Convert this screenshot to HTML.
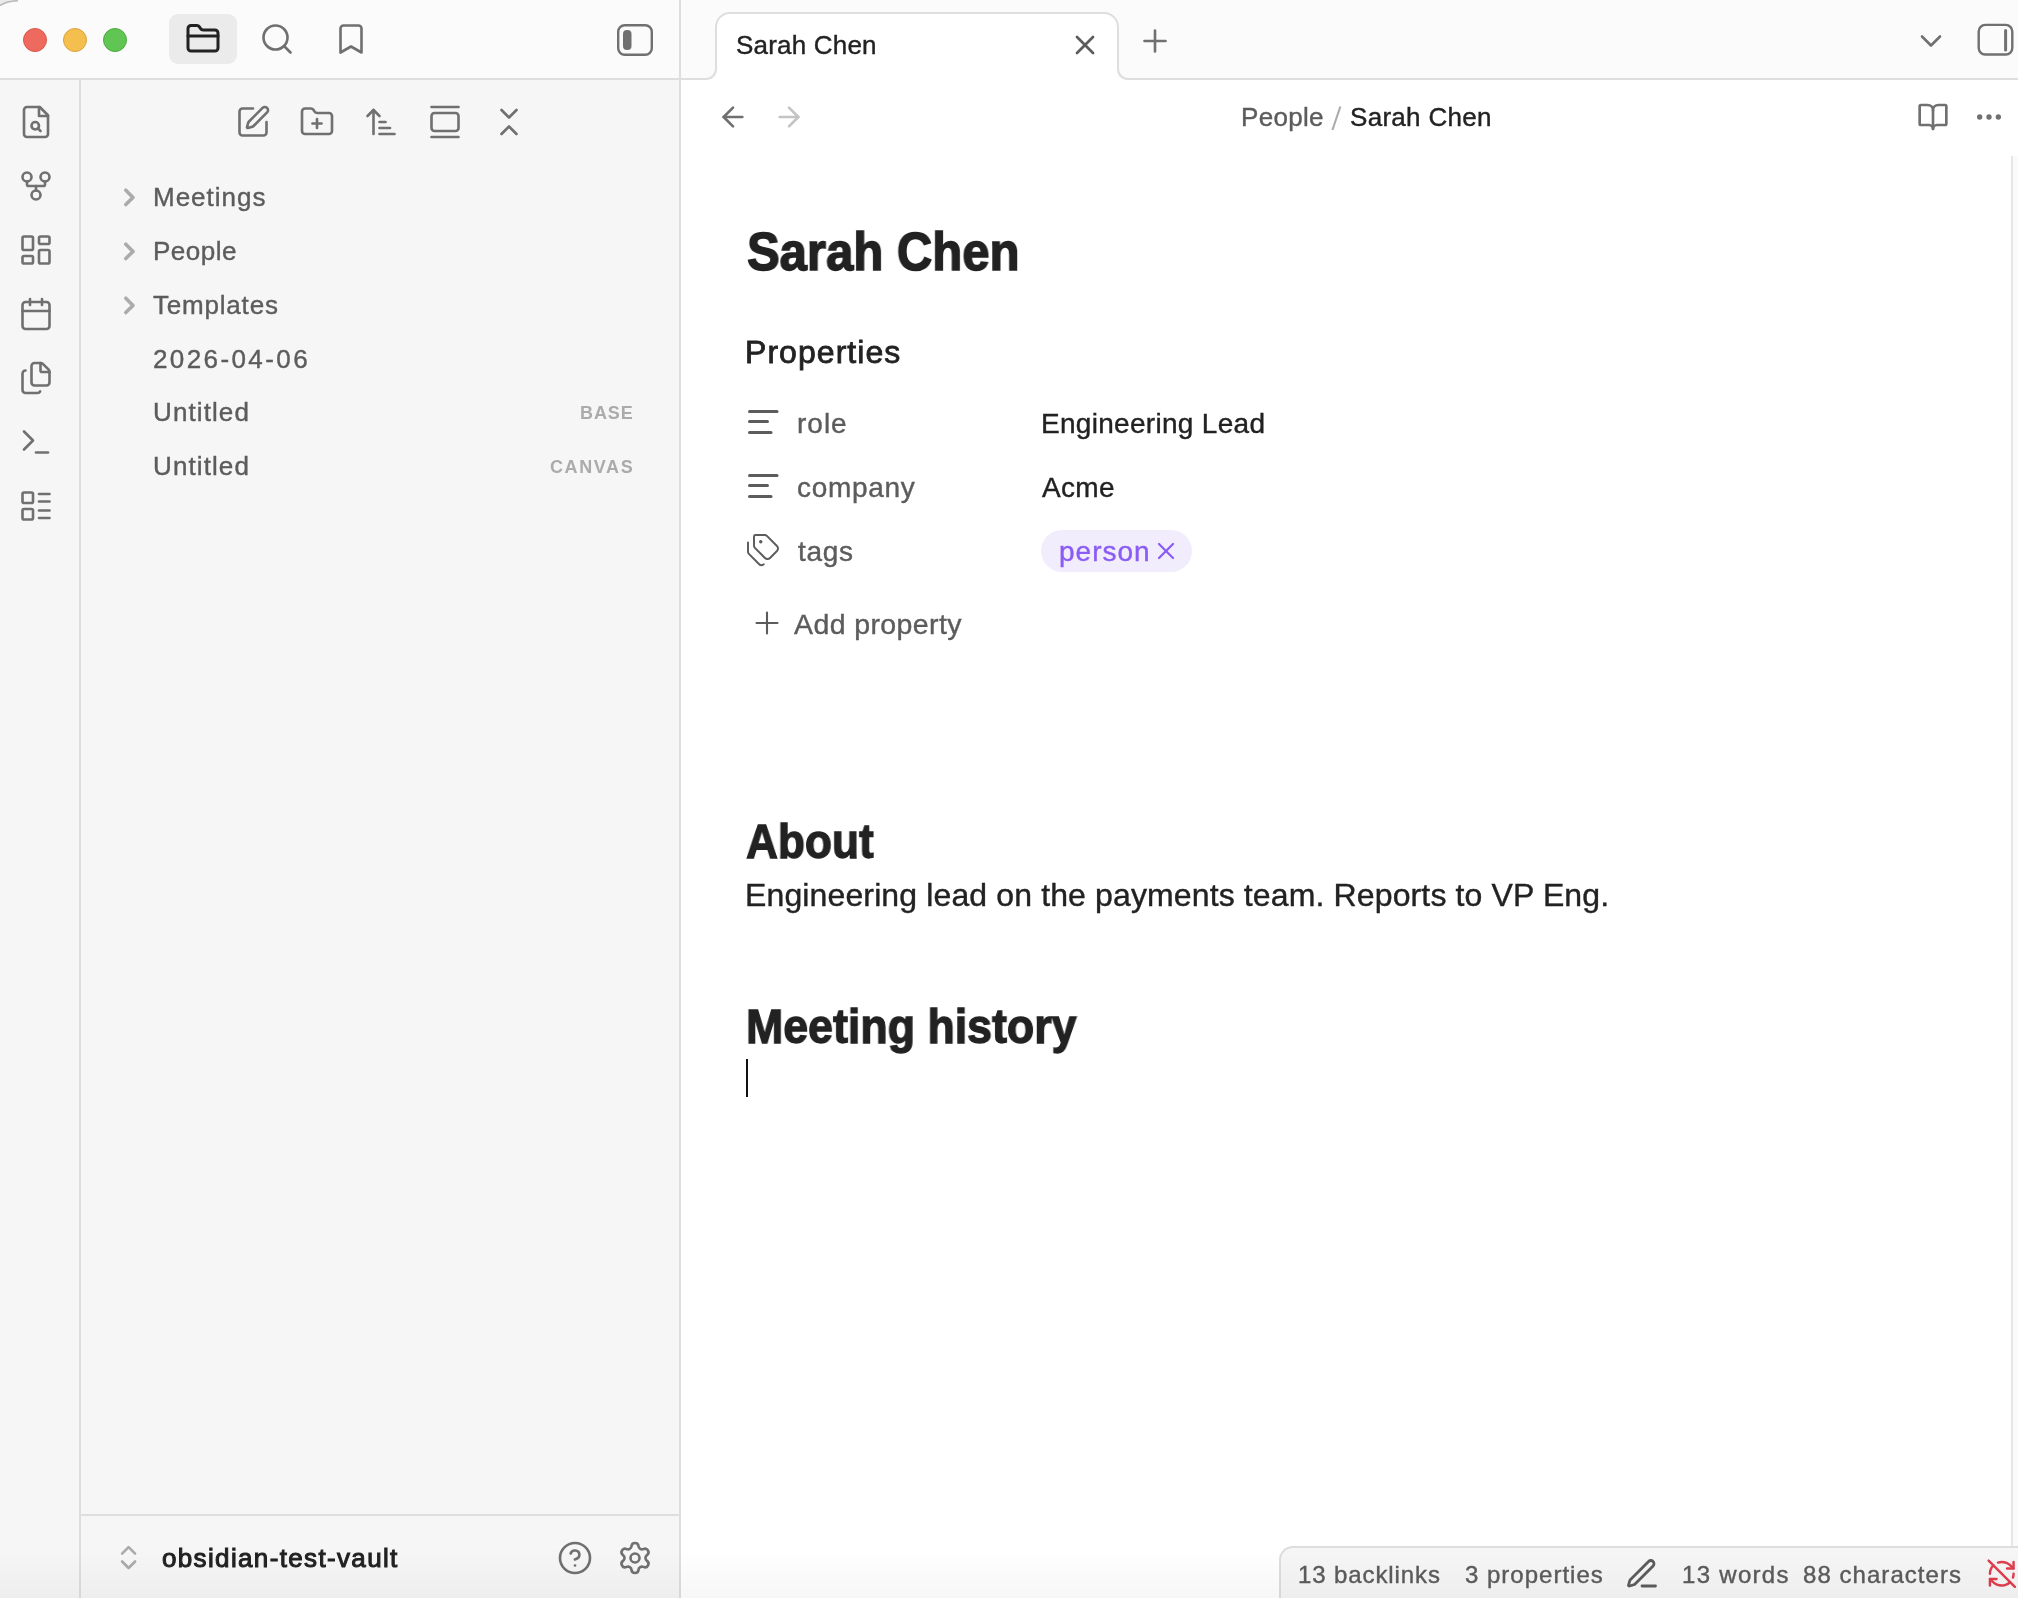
<!DOCTYPE html>
<html><head><meta charset="utf-8">
<style>
html,body{margin:0;padding:0;}
body{width:2018px;height:1598px;overflow:hidden;position:relative;background:#fff;font-family:"Liberation Sans",sans-serif;-webkit-font-smoothing:antialiased;}
.a{position:absolute;}
.t{position:absolute;white-space:nowrap;line-height:1;will-change:transform;-webkit-text-stroke:0.4px currentColor;}
svg.i{position:absolute;fill:none;stroke:currentColor;stroke-linecap:round;stroke-linejoin:round;overflow:visible;}
</style></head><body>
<div class="a" style="left:0px;top:0px;width:2018px;height:78px;background:#fbfbfb;"></div>
<div class="a" style="left:0px;top:80px;width:79px;height:1518px;background:#f6f6f6;"></div>
<div class="a" style="left:81px;top:80px;width:598px;height:1518px;background:#f6f6f6;"></div>
<div class="a" style="left:0px;top:78px;width:706px;height:2px;background:#dedede;"></div>
<div class="a" style="left:1128px;top:78px;width:890px;height:2px;background:#dedede;"></div>
<div class="a" style="left:79px;top:80px;width:2px;height:1518px;background:#dedede;"></div>
<div class="a" style="left:679px;top:0px;width:2px;height:1598px;background:#dedede;"></div>
<div class="a" style="left:81px;top:1514px;width:598px;height:2px;background:#dedede;"></div>
<svg class="a" style="left:0;top:0" width="30" height="12"><path d="M0 0H18Q6 1 0 6Z" fill="#e9e9e9"/><path d="M18 0.6Q6 1.2 0 5.6" fill="none" stroke="#bdbdbd" stroke-width="1.6"/></svg>
<div class="a" style="left:23px;top:28px;width:22px;height:22px;border-radius:50%;background:#ee6a5f;border:1px solid #d8574c"></div>
<div class="a" style="left:63px;top:28px;width:22px;height:22px;border-radius:50%;background:#f5bf4f;border:1px solid #dba23b"></div>
<div class="a" style="left:103px;top:28px;width:22px;height:22px;border-radius:50%;background:#61c554;border:1px solid #4caa40"></div>
<div class="a" style="left:169px;top:14px;width:68px;height:50px;background:#ebebeb;border-radius:9px"></div>
<svg class="i" style="left:185px;top:21px;color:#222222" width="36" height="36" viewBox="0 0 24 24" stroke-width="2.0"><path d="M20 20a2 2 0 0 0 2-2V8a2 2 0 0 0-2-2h-7.9a2 2 0 0 1-1.69-.9L9.6 3.9A2 2 0 0 0 7.93 3H4a2 2 0 0 0-2 2v13a2 2 0 0 0 2 2Z"/><path d="M2 10h20"/></svg>
<svg class="i" style="left:259px;top:21px;color:#707070" width="36" height="36" viewBox="0 0 24 24" stroke-width="1.75"><circle cx="11" cy="11" r="8"/><path d="m21 21-4.3-4.3"/></svg>
<svg class="i" style="left:333px;top:21px;color:#707070" width="36" height="36" viewBox="0 0 24 24" stroke-width="1.75"><path d="m19 21-7-4-7 4V5a2 2 0 0 1 2-2h10a2 2 0 0 1 2 2v16z"/></svg>
<svg class="a" style="left:600px;top:10px" width="70" height="60"><rect x="18.2" y="15.2" width="33.6" height="29.6" rx="6.5" fill="none" stroke="#707070" stroke-width="2.4"/><rect x="23" y="20" width="8.5" height="20" rx="4" fill="#707070"/></svg>
<svg class="a" style="left:681px;top:0" width="1337" height="81" viewBox="681 0 1337 81"><path d="M716 81V27A14 14 0 0 1 730 13H1104A14 14 0 0 1 1118 27V81Z" fill="#fff"/><path d="M681 79H706A10 10 0 0 0 716 69V27A14 14 0 0 1 730 13H1104A14 14 0 0 1 1118 27V69A10 10 0 0 0 1128 79H2018" fill="none" stroke="#dedede" stroke-width="2"/></svg>
<div class="t" style="left:735.5px;top:31.99px;font-size:26px;color:#222;font-weight:normal;letter-spacing:0.2px;">Sarah Chen</div>
<svg class="i" style="left:1069px;top:29px;color:#5c5c5c" width="32" height="32" viewBox="0 0 24 24" stroke-width="2"><path d="M18 6 6 18"/><path d="m6 6 12 12"/></svg>
<svg class="i" style="left:1137px;top:23px;color:#707070" width="36" height="36" viewBox="0 0 24 24" stroke-width="1.75"><path d="M5 12h14"/><path d="M12 5v14"/></svg>
<svg class="i" style="left:1913px;top:23px;color:#707070" width="36" height="36" viewBox="0 0 24 24" stroke-width="1.75"><path d="m6 9 6 6 6-6"/></svg>
<svg class="a" style="left:1960px;top:10px" width="58" height="60"><rect x="18.7" y="14.9" width="33.6" height="29.6" rx="6.5" fill="none" stroke="#707070" stroke-width="2.4"/><path d="M45.6 20.5V40" stroke="#707070" stroke-width="3" stroke-linecap="round"/></svg>
<svg class="i" style="left:717px;top:101px;color:#707070" width="32" height="32" viewBox="0 0 24 24" stroke-width="2"><path d="m12 19-7-7 7-7"/><path d="M19 12H5"/></svg>
<svg class="i" style="left:773px;top:101px;color:#c4c4c4" width="32" height="32" viewBox="0 0 24 24" stroke-width="2"><path d="M5 12h14"/><path d="m12 5 7 7-7 7"/></svg>
<div class="t" style="left:1240.5px;top:103.99px;font-size:26px;color:#5c5c5c;font-weight:normal;letter-spacing:0.3px;">People</div>
<svg class="a" style="left:1320px;top:95px" width="30" height="45"><path d="M20.4 11.5 12.4 35" stroke="#ababab" stroke-width="2.1" stroke-linecap="butt"/></svg>
<div class="t" style="left:1350px;top:103.99px;font-size:26px;color:#222;font-weight:normal;letter-spacing:0.3px;">Sarah Chen</div>
<svg class="i" style="left:1917px;top:101px;color:#707070" width="32" height="32" viewBox="0 0 24 24" stroke-width="2"><path d="M12 7v14"/><path d="M3 18a1 1 0 0 1-1-1V4a1 1 0 0 1 1-1h5a4 4 0 0 1 4 4 4 4 0 0 1 4-4h5a1 1 0 0 1 1 1v13a1 1 0 0 1-1 1h-6a3 3 0 0 0-3 3 3 3 0 0 0-3-3z"/></svg>
<svg class="i" style="left:1973px;top:101px;color:#707070" width="32" height="32" viewBox="0 0 24 24" stroke-width="2"><circle cx="12" cy="12" r="1"/><circle cx="19" cy="12" r="1"/><circle cx="5" cy="12" r="1"/></svg>
<div class="a" style="left:2011px;top:156px;width:2px;height:1390px;background:#e6e6e6;"></div>
<div class="a" style="left:2013px;top:156px;width:5px;height:1390px;background:#fafafa;"></div>
<svg class="i" style="left:18px;top:104px;color:#707070" width="36" height="36" viewBox="0 0 24 24" stroke-width="1.75"><path d="M14.5 2H6a2 2 0 0 0-2 2v16a2 2 0 0 0 2 2h12a2 2 0 0 0 2-2V7.5L14.5 2z"/><polyline points="14 2 14 8 20 8"/><circle cx="11.5" cy="14.5" r="2.5"/><path d="M13.25 16.25 15 18"/></svg>
<svg class="i" style="left:18px;top:168px;color:#707070" width="36" height="36" viewBox="0 0 24 24" stroke-width="1.75"><circle cx="12" cy="18" r="3"/><circle cx="6" cy="6" r="3"/><circle cx="18" cy="6" r="3"/><path d="M18 9v2c0 .6-.4 1-1 1H7c-.6 0-1-.4-1-1V9"/><path d="M12 12v3"/></svg>
<svg class="i" style="left:18px;top:232px;color:#707070" width="36" height="36" viewBox="0 0 24 24" stroke-width="1.75"><rect width="7" height="9" x="3" y="3" rx="1"/><rect width="7" height="5" x="14" y="3" rx="1"/><rect width="7" height="9" x="14" y="12" rx="1"/><rect width="7" height="5" x="3" y="16" rx="1"/></svg>
<svg class="i" style="left:18px;top:296px;color:#707070" width="36" height="36" viewBox="0 0 24 24" stroke-width="1.75"><path d="M8 2v4"/><path d="M16 2v4"/><rect width="18" height="18" x="3" y="4" rx="2"/><path d="M3 10h18"/></svg>
<svg class="i" style="left:18px;top:360px;color:#707070" width="36" height="36" viewBox="0 0 24 24" stroke-width="1.75"><path d="M15 2h-4a2 2 0 0 0-2 2v11a2 2 0 0 0 2 2h8a2 2 0 0 0 2-2V8"/><path d="M16.706 2.706A2.4 2.4 0 0 0 15 2v5a1 1 0 0 0 1 1h5a2.4 2.4 0 0 0-.706-1.706z"/><path d="M5 7a2 2 0 0 0-2 2v11a2 2 0 0 0 2 2h8a2 2 0 0 0 1.732-1"/></svg>
<svg class="i" style="left:18px;top:424px;color:#707070" width="36" height="36" viewBox="0 0 24 24" stroke-width="1.75"><polyline points="4 17 10 11 4 5"/><line x1="12" x2="20" y1="19" y2="19"/></svg>
<svg class="i" style="left:18px;top:488px;color:#707070" width="36" height="36" viewBox="0 0 24 24" stroke-width="1.75"><rect width="7" height="7" x="3" y="3" rx="1"/><rect width="7" height="7" x="3" y="14" rx="1"/><path d="M14 4h7"/><path d="M14 9h7"/><path d="M14 15h7"/><path d="M14 20h7"/></svg>
<svg class="i" style="left:235px;top:103.5px;color:#707070" width="36" height="36" viewBox="0 0 24 24" stroke-width="1.75"><path d="M12 3H5a2 2 0 0 0-2 2v14a2 2 0 0 0 2 2h14a2 2 0 0 0 2-2v-7"/><path d="M18.375 2.625a1 1 0 0 1 3 3l-9.013 9.014a2 2 0 0 1-.853.505l-2.873.84a.5.5 0 0 1-.62-.62l.84-2.873a2 2 0 0 1 .506-.852z"/></svg>
<svg class="i" style="left:299px;top:103.5px;color:#707070" width="36" height="36" viewBox="0 0 24 24" stroke-width="1.75"><path d="M12 10v6"/><path d="M9 13h6"/><path d="M20 20a2 2 0 0 0 2-2V8a2 2 0 0 0-2-2h-7.9a2 2 0 0 1-1.69-.9L9.6 3.9A2 2 0 0 0 7.93 3H4a2 2 0 0 0-2 2v13a2 2 0 0 0 2 2Z"/></svg>
<svg class="i" style="left:363px;top:103.5px;color:#707070" width="36" height="36" viewBox="0 0 24 24" stroke-width="1.75"><path d="m3 8 4-4 4 4"/><path d="M7 4v16"/><path d="M11 12h4"/><path d="M11 16h7"/><path d="M11 20h10"/></svg>
<svg class="i" style="left:427px;top:103.5px;color:#707070" width="36" height="36" viewBox="0 0 24 24" stroke-width="1.75"><path d="M3 2h18"/><rect width="18" height="12" x="3" y="6" rx="2"/><path d="M3 22h18"/></svg>
<svg class="i" style="left:491px;top:103.5px;color:#707070" width="36" height="36" viewBox="0 0 24 24" stroke-width="1.75"><path d="m7 20 5-5 5 5"/><path d="m7 4 5 5 5-5"/></svg>
<svg class="i" style="left:115px;top:183.1px;color:#ababab" width="28.8" height="28.8" viewBox="0 0 24 24" stroke-width="3"><path d="m9 18 6-6-6-6"/></svg>
<div class="t" style="left:153px;top:184.49px;font-size:26px;color:#5c5c5c;font-weight:normal;letter-spacing:1.0px;">Meetings</div>
<svg class="i" style="left:115px;top:237.1px;color:#ababab" width="28.8" height="28.8" viewBox="0 0 24 24" stroke-width="3"><path d="m9 18 6-6-6-6"/></svg>
<div class="t" style="left:153px;top:238.49px;font-size:26px;color:#5c5c5c;font-weight:normal;letter-spacing:0.5px;">People</div>
<svg class="i" style="left:115px;top:290.6px;color:#ababab" width="28.8" height="28.8" viewBox="0 0 24 24" stroke-width="3"><path d="m9 18 6-6-6-6"/></svg>
<div class="t" style="left:153px;top:291.99px;font-size:26px;color:#5c5c5c;font-weight:normal;letter-spacing:0.8px;">Templates</div>
<div class="t" style="left:153px;top:345.99px;font-size:26px;color:#5c5c5c;font-weight:normal;letter-spacing:2.4px;">2026-04-06</div>
<div class="t" style="left:153px;top:399.49px;font-size:26px;color:#5c5c5c;font-weight:normal;letter-spacing:1.1px;">Untitled</div>
<div class="t" style="left:153px;top:453.49px;font-size:26px;color:#5c5c5c;font-weight:normal;letter-spacing:1.1px;">Untitled</div>
<div class="t" style="right:1385px;top:403.8px;font-size:18px;color:#ababab;font-weight:bold;-webkit-text-stroke:0;letter-spacing:0.9px;margin-right:-0.9px">BASE</div>
<div class="t" style="right:1385px;top:457.8px;font-size:18px;color:#ababab;font-weight:bold;-webkit-text-stroke:0;letter-spacing:1.6px;margin-right:-1.6px">CANVAS</div>
<svg class="i" style="left:113.4px;top:1542.4px;color:#ababab" width="31.2" height="31.2" viewBox="0 0 24 24" stroke-width="2"><path d="m7 15 5 5 5-5"/><path d="m7 9 5-5 5 5"/></svg>
<div class="t" style="left:162px;top:1544.99px;font-size:26px;color:#222;font-weight:normal;letter-spacing:1.35px;-webkit-text-stroke:1.0px #222">obsidian-test-vault</div>
<svg class="i" style="left:557px;top:1540px;color:#707070" width="36" height="36" viewBox="0 0 24 24" stroke-width="1.75"><circle cx="12" cy="12" r="10"/><path d="M9.09 9a3 3 0 0 1 5.83 1c0 2-3 3-3 3"/><path d="M12 17h.01"/></svg>
<svg class="i" style="left:617px;top:1540px;color:#707070" width="36" height="36" viewBox="0 0 24 24" stroke-width="1.75"><path d="M9.671 4.136a2.34 2.34 0 0 1 4.659 0 2.34 2.34 0 0 0 3.319 1.915 2.34 2.34 0 0 1 2.33 4.033 2.34 2.34 0 0 0 0 3.831 2.34 2.34 0 0 1-2.33 4.033 2.34 2.34 0 0 0-3.319 1.915 2.34 2.34 0 0 1-4.659 0 2.34 2.34 0 0 0-3.32-1.915 2.34 2.34 0 0 1-2.33-4.033 2.34 2.34 0 0 0 0-3.831A2.34 2.34 0 0 1 6.35 6.051a2.34 2.34 0 0 0 3.319-1.915"/><circle cx="12" cy="12" r="3"/></svg>
<div class="t" style="left:746.7px;top:225.14px;font-size:53px;color:#222;font-weight:bold;letter-spacing:0px;-webkit-text-stroke:0;transform:scaleX(0.925);transform-origin:0 0;-webkit-text-stroke:1.5px #222">Sarah Chen</div>
<div class="t" style="left:745px;top:335.91px;font-size:32px;color:#222;font-weight:normal;letter-spacing:1.05px;-webkit-text-stroke:0.8px #222">Properties</div>
<svg class="a" style="left:740px;top:400px" width="50" height="110" fill="none" stroke="#5c5c5c" stroke-width="3" stroke-linecap="round"><path d="M9.5 11.5H37"/><path d="M9.5 21.5H27.5"/><path d="M9.5 32.5H31"/><path d="M9.5 75.5H37"/><path d="M9.5 85.5H27.5"/><path d="M9.5 96.5H31"/></svg>
<svg class="i" style="left:745px;top:532px;color:#5c5c5c" width="36" height="36" viewBox="0 0 24 24" stroke-width="1.3"><path d="M13.172 2a2 2 0 0 1 1.414.586l6.71 6.71a2.4 2.4 0 0 1 0 3.408l-4.592 4.592a2.4 2.4 0 0 1-3.408 0l-6.71-6.71A2 2 0 0 1 6 9.172V3a1 1 0 0 1 1-1z"/><path d="M2 7v6.172a2 2 0 0 0 .586 1.414l6.71 6.71a2.4 2.4 0 0 0 3.191.193"/><circle cx="10.5" cy="6.5" r=".5" fill="currentColor"/></svg>
<div class="t" style="left:797px;top:409.80px;font-size:28px;color:#5c5c5c;font-weight:normal;letter-spacing:1.0px;">role</div>
<div class="t" style="left:796.7px;top:473.80px;font-size:28px;color:#5c5c5c;font-weight:normal;letter-spacing:0.7px;">company</div>
<div class="t" style="left:797.5px;top:537.80px;font-size:28px;color:#5c5c5c;font-weight:normal;letter-spacing:0.7px;">tags</div>
<div class="t" style="left:1040.7px;top:410.30px;font-size:28px;color:#222;font-weight:normal;letter-spacing:0.3px;">Engineering Lead</div>
<div class="t" style="left:1042px;top:474.30px;font-size:28px;color:#222;font-weight:normal;letter-spacing:0.3px;">Acme</div>
<div class="a" style="left:1041px;top:530px;width:151px;height:42px;background:#f1edfd;border-radius:21px"></div>
<div class="t" style="left:1059px;top:537.80px;font-size:28px;color:#8a5cf5;font-weight:normal;letter-spacing:1.0px;">person</div>
<svg class="i" style="left:1152px;top:537px;color:#8a5cf5" width="28" height="28" viewBox="0 0 24 24" stroke-width="1.9"><path d="M18 6 6 18"/><path d="m6 6 12 12"/></svg>
<svg class="i" style="left:749px;top:605px;color:#5c5c5c" width="36" height="36" viewBox="0 0 24 24" stroke-width="1.4"><path d="M5 12h14"/><path d="M12 5v14"/></svg>
<div class="t" style="left:794px;top:609.87px;font-size:28.5px;color:#5c5c5c;font-weight:normal;letter-spacing:0.4px;">Add property</div>
<div class="t" style="left:746.1px;top:817.26px;font-size:48.6px;color:#222;font-weight:bold;letter-spacing:0px;-webkit-text-stroke:0;transform:scaleX(0.91);transform-origin:0 0;-webkit-text-stroke:1.3px #222">About</div>
<div class="t" style="left:745px;top:878.91px;font-size:32px;color:#222;font-weight:normal;letter-spacing:0.13px;">Engineering lead on the payments team. Reports to VP Eng.</div>
<div class="t" style="left:745.6px;top:1002.41px;font-size:48.3px;color:#222;font-weight:bold;letter-spacing:0px;-webkit-text-stroke:0;transform:scaleX(0.926);transform-origin:0 0;-webkit-text-stroke:1.3px #222">Meeting history</div>
<div class="a" style="left:746px;top:1059px;width:2px;height:38px;background:#111;"></div>
<div class="a" style="left:1279px;top:1546px;width:800px;height:80px;background:#f6f6f6;border-left:2px solid #dedede;border-top:2px solid #dedede;border-top-left-radius:14px"></div>
<div class="t" style="left:1298px;top:1562.68px;font-size:24px;color:#5c5c5c;font-weight:normal;letter-spacing:0.9px;">13 backlinks</div>
<div class="t" style="left:1465px;top:1562.68px;font-size:24px;color:#5c5c5c;font-weight:normal;letter-spacing:1.0px;">3 properties</div>
<svg class="i" style="left:1623.5px;top:1556px;color:#5c5c5c" width="36" height="36" viewBox="0 0 24 24" stroke-width="1.85"><path d="M12 20h9"/><path d="M16.376 3.622a1 1 0 0 1 3.002 3.002L7.368 18.635a2 2 0 0 1-.855.506l-2.872.838a.5.5 0 0 1-.62-.62l.838-2.872a2 2 0 0 1 .506-.854z"/></svg>
<div class="t" style="left:1682px;top:1562.68px;font-size:24px;color:#5c5c5c;font-weight:normal;letter-spacing:1.3px;">13 words</div>
<div class="t" style="left:1803px;top:1562.68px;font-size:24px;color:#5c5c5c;font-weight:normal;letter-spacing:1.05px;">88 characters</div>
<svg class="i" style="left:1985.5px;top:1558px;color:#e03e4e" width="31.5" height="31.5" viewBox="0 0 24 24" stroke-width="1.85"><path d="M21 8L18.74 5.74A9.75 9.75 0 0 0 12 3C11 3 10.030 3.160 9.130 3.470"/><path d="M8 16H3v5"/><path d="M3 12C3 9.51 4 7.26 5.640 5.640"/><path d="m3 16 2.26 2.26A9.75 9.75 0 0 0 12 21c2.49 0 4.74-1 6.360-2.640"/><path d="M21 12c0 1-.16 1.97-.47 2.87"/><path d="M21 3v5h-5"/><path d="M22 22 2 2"/></svg>
<div class="a" style="left:0;top:1548px;width:2018px;height:50px;background:linear-gradient(rgba(0,0,0,0),rgba(0,0,0,0.033))"></div>
</body></html>
